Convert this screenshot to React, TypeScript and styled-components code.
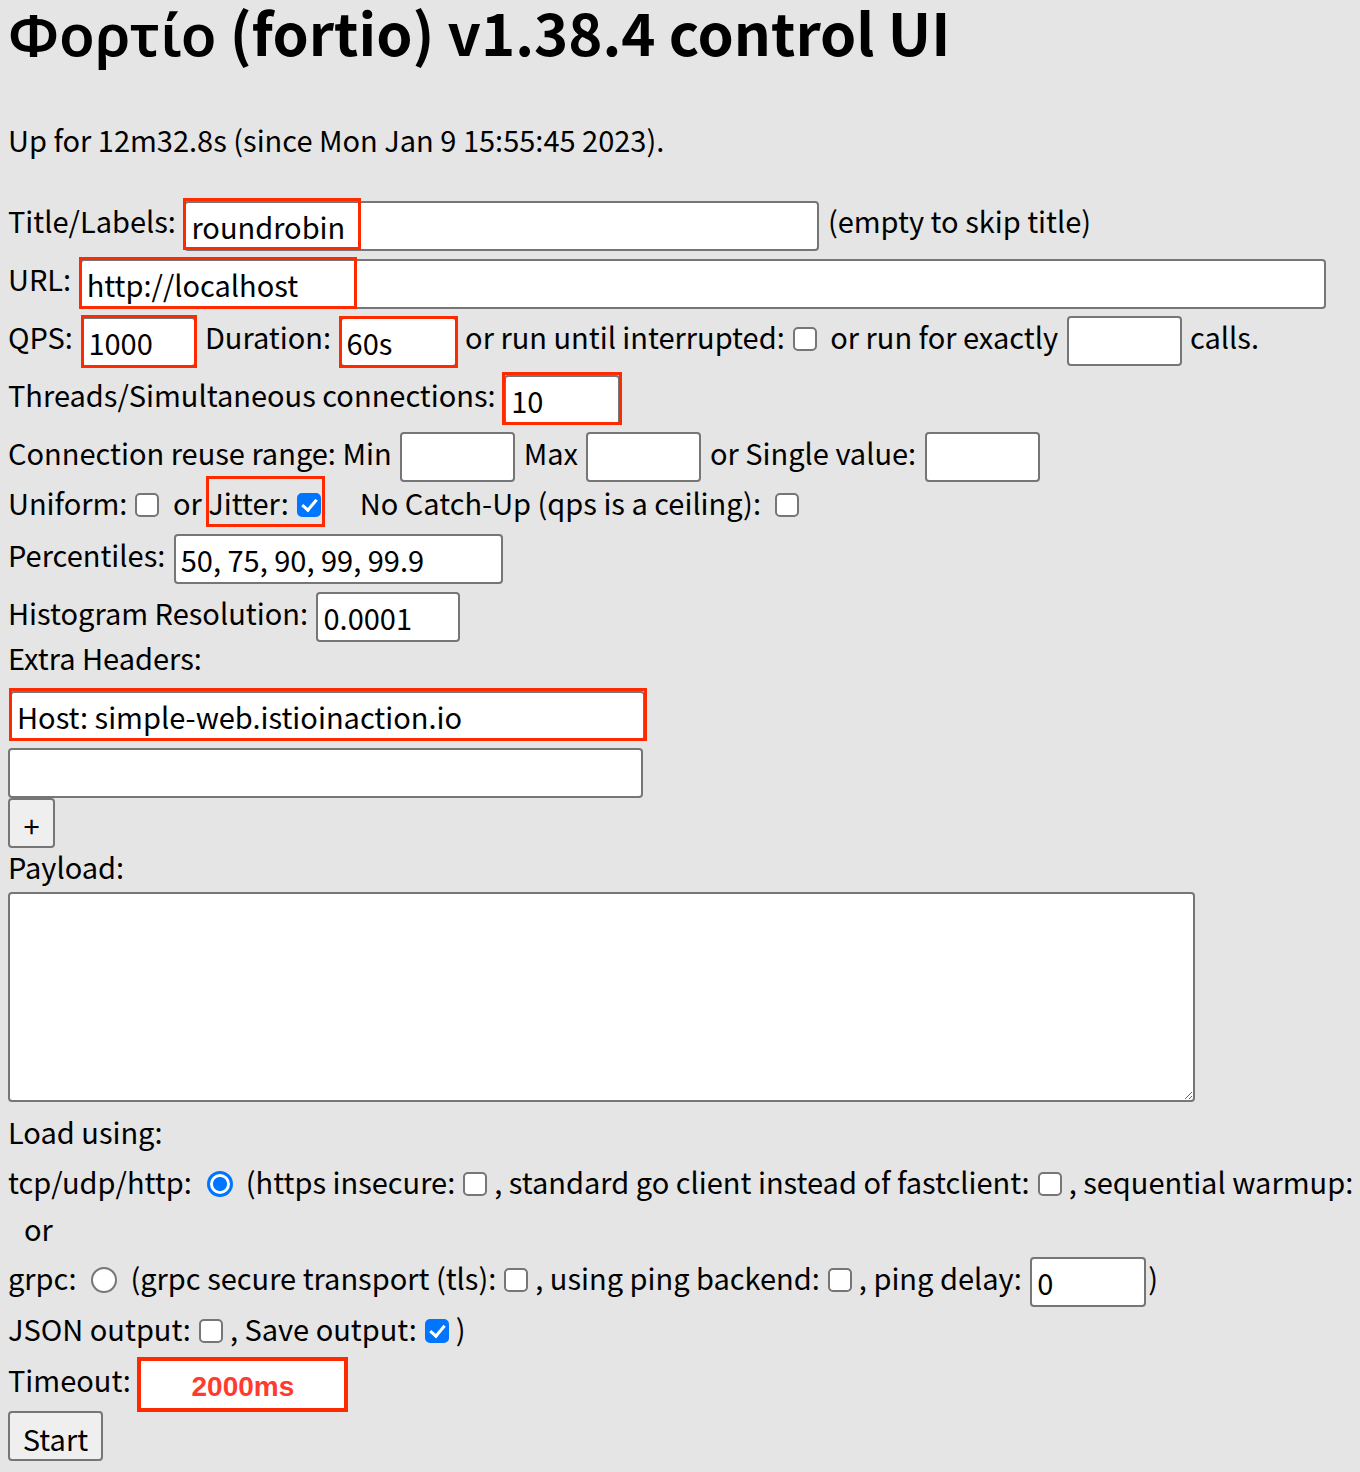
import React from "react";
import styled, { createGlobalStyle } from "styled-components";

const Global = createGlobalStyle`
  html { background: #e5e5e5; }
  body {
    margin: 8px;
    font-family: "Noto Sans CJK KR", "Noto Sans", sans-serif;
    font-size: 29px;
    color: #000;
    white-space: nowrap;
    overflow: hidden;
  }
`;

const Heading = styled.h1`
  margin: 0;
  height: 46px;
  line-height: 46px;
  font-size: 58px;
  font-weight: 700;
`;

const Greek = styled.span`
  font-family: "Noto Sans", "Open Sans", sans-serif;
  font-weight: 600;
`;

const Uptime = styled.p`
  margin: 71px 0 0;
  height: 28px;
  line-height: 28px;
`;

const Form = styled.form`
  display: flex;
  flex-direction: column;
  margin-top: 42px;
`;

const Line = styled.div<{ $h: number; $gap: number; $indent?: number }>`
  height: ${(p) => p.$h}px;
  line-height: ${(p) => p.$h}px;
  margin-top: ${(p) => p.$gap}px;
  padding-left: ${(p) => p.$indent ?? 0}px;
`;

const Field = styled.span`
  position: relative;
  display: inline-block;
  vertical-align: middle;
  line-height: normal;
  margin: 0 2px;
`;

const TextInput = styled.input<{ $w: number; $flush?: boolean }>`
  box-sizing: border-box;
  width: ${(p) => p.$w}px;
  height: 50px;
  margin: 0 ${(p) => (p.$flush ? 0 : 2)}px;
  padding: 0 5px;
  border: 2px solid #767676;
  border-radius: 4px;
  background: #fff;
  font: inherit;
  font-size: 29px;
  color: #000;
  vertical-align: middle;
  outline: none;
`;

const Mark = styled.span<{ $l: number; $t: number; $w: number; $h: number }>`
  position: absolute;
  left: ${(p) => p.$l}px;
  top: ${(p) => p.$t}px;
  width: ${(p) => p.$w}px;
  height: ${(p) => p.$h}px;
  box-sizing: border-box;
  border: 3px solid #ff2a00;
  pointer-events: none;
`;

const Check = styled.input.attrs({ type: "checkbox" })`
  appearance: none;
  position: relative;
  box-sizing: border-box;
  width: 24px;
  height: 24px;
  margin: 0 7px 0 8px;
  border: 2px solid #767676;
  border-radius: 5px;
  background: #fff;
  vertical-align: middle;
  top: -2px;

  &:checked {
    background: #0075ff;
    border-color: #0075ff;
  }
  &:checked::after {
    content: "";
    position: absolute;
    left: 6px;
    top: 1px;
    width: 6px;
    height: 12px;
    border: solid #fff;
    border-width: 0 3px 3px 0;
    transform: rotate(40deg);
  }
`;

const Radio = styled.input.attrs({ type: "radio" })`
  appearance: none;
  position: relative;
  box-sizing: border-box;
  width: 26px;
  height: 26px;
  margin: 0 13px 0 15px;
  border: 2px solid #767676;
  border-radius: 50%;
  background: #fff;
  vertical-align: middle;
  top: -2px;

  &:checked {
    border: 3px solid #0075ff;
    background: radial-gradient(circle, #0075ff 0 6.5px, #fff 7.5px);
  }
`;

const JitterWrap = styled.span`
  position: relative;
  display: inline-block;
`;

const PlainButton = styled.button<{ $w: number }>`
  box-sizing: border-box;
  width: ${(p) => p.$w}px;
  height: 50px;
  padding: 0;
  border: 2px solid #767676;
  border-radius: 4px;
  background: #efefef;
  font: inherit;
  font-size: 29px;
  color: #000;
  vertical-align: top;
`;

const PayloadArea = styled.textarea`
  box-sizing: border-box;
  width: 1187px;
  height: 210px;
  border: 2px solid #767676;
  border-radius: 4px;
  background: #fff;
  display: block;
  outline: none;
`;

const TimeoutBox = styled.span`
  display: inline-block;
  box-sizing: border-box;
  width: 211px;
  height: 55px;
  border: 4px solid #ff2a00;
  background: #fff;
  vertical-align: middle;
  text-align: center;
  line-height: 52px;
  font-family: "Liberation Sans", Arial, sans-serif;
  font-weight: 700;
  font-size: 28px;
  color: #ff3b30;
`;

const Spacer = styled.span<{ $w: number }>`
  display: inline-block;
  width: ${(p) => p.$w}px;
`;

export default function App() {
  return (
    <>
      <Global />
      <Heading>
        <Greek>Φορτίο</Greek> (fortio) v1.38.4 control UI
      </Heading>
      <Uptime>Up for 12m32.8s (since Mon Jan 9 15:55:45 2023).</Uptime>
      <Form onSubmit={(e) => e.preventDefault()}>
        <Line $h={50} $gap={0}>
          Title/Labels:{" "}
          <Field>
            <TextInput $flush $w={635} defaultValue="roundrobin" />
            <Mark $l={-1} $t={-2} $w={178} $h={52} />
          </Field>{" "}
          (empty to skip title)
        </Line>
        <Line $h={50} $gap={8}>
          URL:{" "}
          <Field>
            <TextInput $flush $w={1246} defaultValue="http://localhost" />
            <Mark $l={-1} $t={-1} $w={278} $h={52} />
          </Field>
        </Line>
        <Line $h={51} $gap={8}>
          QPS:{" "}
          <Field>
            <TextInput $flush $w={115} defaultValue="1000" />
            <Mark $l={0} $t={-1} $w={116} $h={53} />
          </Field>{" "}
          Duration:{" "}
          <Field>
            <TextInput $flush $w={117} defaultValue="60s" />
            <Mark $l={-1} $t={0} $w={119} $h={52} />
          </Field>{" "}
          or run until interrupted:
          <Check />
          {" "}or run for exactly{" "}
          <TextInput $w={115} />{" "}
          calls.
        </Line>
        <Line $h={50} $gap={7}>
          Threads/Simultaneous connections:{" "}
          <Field>
            <TextInput $flush $w={116} defaultValue="10" />
            <Mark $l={-2} $t={-2} $w={120} $h={53} />
          </Field>
        </Line>
        <Line $h={51} $gap={8}>
          Connection reuse range: Min <TextInput $w={115} /> Max{" "}
          <TextInput $w={115} /> or Single value: <TextInput $w={115} />
        </Line>
        <Line $h={32} $gap={8}>
          Uniform:
          <Check />
          {" "}or{" "}
          <JitterWrap>
            Jitter:
            <Check defaultChecked />
            <Mark $l={-2} $t={-10} $w={119} $h={51} />
          </JitterWrap>
          <Spacer $w={32} />
          No Catch-Up (qps is a ceiling):{" "}
          <Check />
        </Line>
        <Line $h={50} $gap={11}>
          Percentiles: <TextInput $w={329} defaultValue="50, 75, 90, 99, 99.9" />
        </Line>
        <Line $h={50} $gap={8}>
          Histogram Resolution: <TextInput $w={144} defaultValue="0.0001" />
        </Line>
        <Line $h={28} $gap={6}>
          Extra Headers:
        </Line>
        <Line $h={50} $gap={14}>
          <Field>
            <TextInput $flush $w={635} defaultValue="Host: simple-web.istioinaction.io" />
            <Mark $l={-1} $t={-2} $w={638} $h={53} />
          </Field>
        </Line>
        <Line $h={50} $gap={8}>
          <TextInput $flush $w={635} />
        </Line>
        <Line $h={50} $gap={5}>
          <PlainButton $w={47} type="button">+</PlainButton>
        </Line>
        <Line $h={28} $gap={4}>
          Payload:
        </Line>
        <Line $h={210} $gap={12}>
          <PayloadArea />
        </Line>
        <Line $h={28} $gap={15}>
          Load using:
        </Line>
        <Line $h={28} $gap={22}>
          tcp/udp/http:
          <Radio name="load" defaultChecked />
          (https insecure:
          <Check />
          , standard go client instead of fastclient:
          <Check />
          , sequential warmup:
        </Line>
        <Line $h={28} $gap={19} $indent={16}>
          or
        </Line>
        <Line $h={50} $gap={10}>
          grpc:
          <Radio name="load" />
          (grpc secure transport (tls):
          <Check />
          , using ping backend:
          <Check />
          , ping delay: <TextInput $w={116} defaultValue="0" />)
        </Line>
        <Line $h={28} $gap={12}>
          JSON output:
          <Check />
          , Save output:
          <Check defaultChecked />)
        </Line>
        <Line $h={54} $gap={10}>
          Timeout: <TimeoutBox>2000ms</TimeoutBox>
        </Line>
        <Line $h={50} $gap={5}>
          <PlainButton $w={95} type="submit">Start</PlainButton>
        </Line>
      </Form>
    </>
  );
}
